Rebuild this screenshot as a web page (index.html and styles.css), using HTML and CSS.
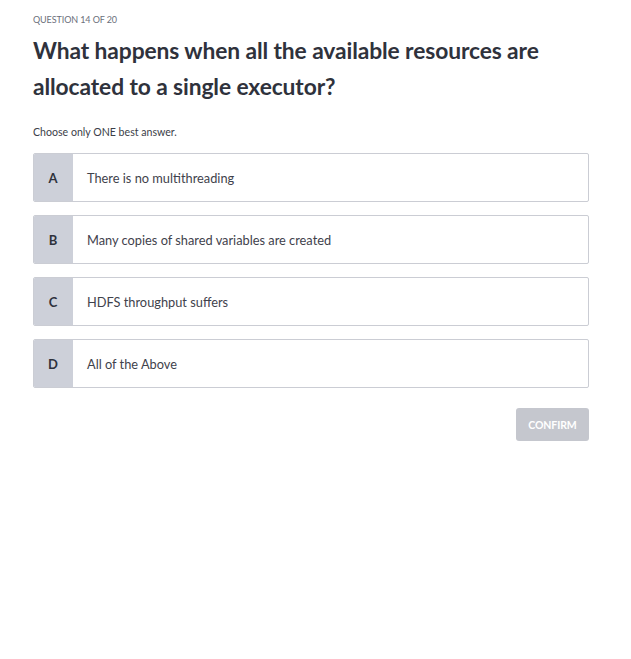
FILE: index.html
```html
<!DOCTYPE html>
<html>
<head>
<meta charset="utf-8">
<link rel="stylesheet" href="styles.css">
</head>
<body>
<main class="quiz">
  <div class="counter">QUESTION 14 OF 20</div>
  <h1 class="question">What happens when all the available resources are allocated to a single executor?</h1>
  <p class="hint">Choose only ONE best answer.</p>
  <ul class="options">
    <li class="option"><span class="letter">A</span><span class="text">There is no multithreading</span></li>
    <li class="option"><span class="letter">B</span><span class="text">Many copies of shared variables are created</span></li>
    <li class="option"><span class="letter">C</span><span class="text">HDFS throughput suffers</span></li>
    <li class="option"><span class="letter">D</span><span class="text">All of the Above</span></li>
  </ul>
  <div class="actions"><button class="confirm">CONFIRM</button></div>
</main>
</body>
</html>
```
FILE: styles.css
```css
html, body { margin: 0; padding: 0; background: #fff; }
body { font-family: Lato, "Open Sans", sans-serif; color: #3b3e48; }
.quiz { width: 556px; margin-left: 33px; padding-top: 14px; }
.counter { font-size: 9px; color: #6b6f7b; line-height: 12px; letter-spacing: -0.1px; }
.question { font-size: 22.8px; font-weight: 700; line-height: 36px; margin: 6px 0 0; color: #2f323c; letter-spacing: -0.1px; }
.hint { font-size: 10.6px; color: #3b3e48; margin: 21px 0 0; line-height: 14px; }
.options { list-style: none; margin: 14px 0 0; padding: 0; display: flex; flex-direction: column; gap: 13px; }
.option { display: flex; height: 49px; box-sizing: border-box; border: 1px solid #cbcdd4; border-radius: 2px; overflow: hidden; }
.letter { width: 40px; margin: -1px 0 -1px -1px; background: #cdd0d9; display: flex; align-items: center; justify-content: center; font-size: 13px; font-weight: 700; color: #2f323c; flex-shrink: 0; }
.text { display: flex; align-items: center; padding-left: 14px; font-size: 12.8px; color: #3f424c; }
.actions { display: flex; justify-content: flex-end; margin-top: 20px; }
.confirm { width: 73px; height: 33px; border: 0; border-radius: 3px; background: #c5c7ce; color: #fff; font-family: Lato, sans-serif; font-weight: 700; font-size: 10.5px; letter-spacing: -0.1px; padding: 0; }
```
